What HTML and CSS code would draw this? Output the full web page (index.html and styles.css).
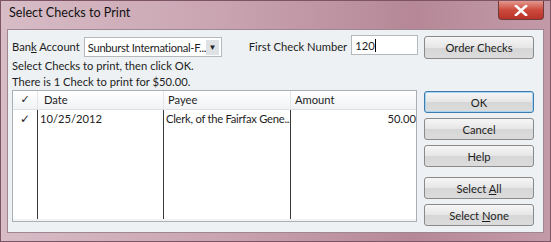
FILE: index.html
```html
<!DOCTYPE html>
<html lang="en">
<head>
  <meta charset="UTF-8" />
  <title>Select Checks to Print</title>
  <link rel="stylesheet" href="styles.css">
</head>
<body>
  <div class="window">
    <div class="titlebar">
      <span class="title">Select Checks to Print</span>
      <span class="close-btn">
        <svg width="14" height="11" viewBox="0 0 14 11"><path d="M2 1 L12 10 M12 1 L2 10" stroke="#fff" stroke-width="2.6" stroke-linecap="square"/></svg>
      </span>
    </div>
    <div class="client">
      <div class="top-row">
        <span class="label">Ban<u>k</u> Account</span>
        <div class="combo">
          <span class="combo-text">Sunburst International-F...</span>
          <span class="combo-arrow">&#9660;</span>
        </div>
        <span class="label first-label">First Check Number</span>
        <div class="input">120<span class="caret"></span></div>
        <button class="btn order-btn">Order Checks</button>
      </div>
      <div class="info">
        <div>Select Checks to print, then click OK.</div>
        <div>There is 1 Check to print for $50.00.</div>
      </div>
      <div class="main">
        <div class="table">
          <div class="thead">
            <div class="col c-check">&#10003;</div>
            <div class="col c-date">Date</div>
            <div class="col c-payee">Payee</div>
            <div class="col c-amount">Amount</div>
          </div>
          <div class="tbody">
            <div class="col c-check"><span class="tick">&#10003;</span></div>
            <div class="col c-date">10/25/2012</div>
            <div class="col c-payee payee-text">Clerk, of the Fairfax Gene...</div>
            <div class="col c-amount num">50.00</div>
          </div>
        </div>
        <div class="side">
          <button class="btn default">OK</button>
          <button class="btn">Cancel</button>
          <button class="btn">Help</button>
          <button class="btn spaced">Select <u>A</u>ll</button>
          <button class="btn">Select <u>N</u>one</button>
        </div>
      </div>
    </div>
  </div>
</body>
</html>
```

FILE: styles.css
```css
body {
  margin: 0;
  font-family: 'Lato', 'Open Sans', sans-serif;
  font-size: 11.2px;
  color: #1e1e1e;
}
.window {
  width: 549px;
  height: 240px;
  border: 1px solid #7d5464;
  background: linear-gradient(90deg, #d7bcc6 0%, #c9a4b1 40%, #b68897 75%, #c39aa8 100%);
  display: flex;
  flex-direction: column;
}
.titlebar {
  height: 28px;
  display: flex;
  justify-content: space-between;
  align-items: flex-start;
}
.title {
  font-size: 12.6px;
  color: #111;
  padding: 4px 0 0 8px;
}
.close-btn {
  width: 44px;
  height: 18px;
  margin-right: 6px;
  border: 1px solid #6e3a3a;
  border-top: none;
  border-radius: 0 0 4px 4px;
  background: linear-gradient(#e3988f, #cc4a3c 50%, #b8322a 100%);
  display: flex;
  align-items: center;
  justify-content: center;
}
.client {
  flex: 1;
  margin: 0 6px 8px 6px;
  border: 1px solid #9f8790;
  background: #edf1f3;
  padding: 4px 9px 0 4px;
  display: flex;
  flex-direction: column;
}
.top-row {
  display: flex;
  align-items: center;
  height: 25px;
}
.label {
  white-space: nowrap;
}
.combo {
  margin-left: 4px;
  width: 138px;
  height: 20px;
  border: 1px solid #b5b9bd;
  background: #fff;
  display: flex;
  align-items: center;
  justify-content: space-between;
  padding-left: 3px;
  box-sizing: border-box;
  margin-top: 1px;
}
.combo-text {
  white-space: nowrap;
  letter-spacing: -0.3px;
}
.combo-arrow {
  font-size: 8px;
  width: 15px;
  height: 15px;
  margin-right: 2px;
  background: #dfe2e5;
  display: flex;
  align-items: center;
  justify-content: center;
  color: #222;
}
.first-label {
  margin-left: 27px;
}
.input {
  margin-left: 4px;
  margin-top: -3px;
  width: 67px;
  height: 20px;
  box-sizing: border-box;
  border: 1px solid #b5b9bd;
  background: #fff;
  padding-left: 3px;
  display: flex;
  align-items: center;
}
.caret {
  width: 1px;
  height: 13px;
  background: #000;
}
.btn {
  font-family: inherit;
  font-size: 11.2px;
  color: #1e1e1e;
  width: 110px;
  height: 22px;
  border: 1px solid #8a8a8a;
  border-radius: 3px;
  background: linear-gradient(#f6f6f6, #e6e6e6 50%, #d6d6d6 51%, #dcdcdc);
  padding: 0;
}
.order-btn {
  margin-left: auto;
  margin-top: 2px;
  height: 23px;
}
.info {
  margin-top: -1px;
  line-height: 16px;
}
.main {
  display: flex;
  gap: 7px;
  margin-top: 0;
}
.table {
  width: 406px;
  height: 132px;
  box-sizing: border-box;
  border: 1px solid #a9afb4;
  background: #fff;
  display: flex;
  flex-direction: column;
}
.thead {
  display: flex;
  height: 18px;
  background: linear-gradient(#fff, #f1f3f5);
  border-bottom: 1px solid #dde1e4;
}
.thead .col {
  border-right: 1px solid #e3e6e9;
  line-height: 18px;
  padding-left: 4px;
}
.tbody {
  display: flex;
  flex: 1;
  border-bottom: 2px solid #f1f3f5;
}
.tbody .col {
  border-right: 1px solid #3a3a3a;
  padding: 1px 0 0 2px;
  line-height: 16px;
}
.col {
  box-sizing: border-box;
  white-space: nowrap;
  overflow: hidden;
}
.c-check {
  width: 25px;
  text-align: center;
  font-family: 'DejaVu Sans', sans-serif;
  font-weight: bold;
  font-style: italic;
}
.thead .c-check {
  padding-left: 0;
  font-size: 11px;
}
.tbody .c-check {
  padding-left: 0;
  font-size: 12px;
}
.c-date {
  width: 126px;
}
.thead .c-date {
  padding-left: 6px;
}
.c-payee {
  width: 127px;
}
.payee-text {
  letter-spacing: -0.25px;
}
.c-amount {
  flex: 1;
}
.thead .c-amount,
.tbody .c-amount {
  border-right: none;
}
.num {
  text-align: right;
  padding-right: 3px;
}
.side {
  display: flex;
  flex-direction: column;
  gap: 5px;
  margin-top: 1px;
}
.btn.default {
  border-color: #3d7bad;
  box-shadow: inset 0 0 0 1px #a6d4f1;
}
.btn.spaced {
  margin-top: 5px;
}
```
